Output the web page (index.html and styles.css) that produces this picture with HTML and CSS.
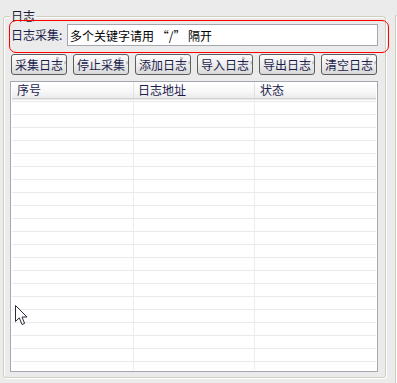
FILE: index.html
```html
<!DOCTYPE html>
<html>
   <head>
      <title>日志</title>
      <meta charset="utf-8">
      <link rel="stylesheet" href="styles.css">
   </head>
   <body>
      <div class="window">
         <div class="group">
            <div class="legend">日志</div>
            <div class="field-row">
               <label class="field-label">日志采集:</label>
               <input class="field-input" type="text" value="多个关键字请用 “/” 隔开">
            </div>
            <div class="btn-row">
               <button class="btn">采集日志</button>
               <button class="btn">停止采集</button>
               <button class="btn">添加日志</button>
               <button class="btn">导入日志</button>
               <button class="btn">导出日志</button>
               <button class="btn">清空日志</button>
            </div>
            <div class="list">
               <div class="list-head">
                  <div class="col col-id">序号</div>
                  <div class="col col-path">日志地址</div>
                  <div class="col col-state">状态</div>
               </div>
               <div class="list-body">
                  <div class="col col-id"></div>
                  <div class="col col-path"></div>
                  <div class="col col-state"></div>
               </div>
            </div>
         </div>
         <div class="side"></div>
      </div>

      <div class="mark"></div>

      <svg class="cursor" width="13" height="21" viewBox="0 0 13 21">
         <path d="M0.5 0.5 L0.5 16.5 L4.3 12.8 L7 19.5 L9.6 18.4 L7 12 L12 12 Z" fill="#fff" stroke="#2a2a3a" stroke-width="1" stroke-linejoin="round"/>
      </svg>
   </body>
</html>
```

FILE: styles.css
```css
body, html {
   margin: 0;
   width: 397px;
   height: 383px;
   overflow: hidden;
   background: #ebebeb;
   font-family: "Noto Sans CJK SC", sans-serif;
   font-size: 12px;
   position: relative;
}

.window {
   display: flex;
   height: 383px;
}

.group {
   box-sizing: border-box;
   width: 383px;
   height: 362px;
   margin: 16px 0 0 3px;
   padding: 0 7px 5px 6px;
   border: 1px solid #cfcfbe;
   border-radius: 3px;
   box-shadow: inset 1px 1px 0 #fff, 1px 1px 0 #fff;
   display: flex;
   flex-direction: column;
}

.legend {
   align-self: flex-start;
   height: 14px;
   line-height: 14px;
   margin: -8px 0 0 0;
   padding: 0 1px;
   background: #ebebeb;
   color: #1a1a34;
}

.field-row {
   display: flex;
   align-items: center;
   height: 22px;
   margin-top: 1px;
}

.field-label {
   flex: 1;
   padding-left: 1px;
   color: #1c1c4c;
   line-height: 14px;
}

.field-input {
   box-sizing: border-box;
   width: 311px;
   height: 22px;
   margin: 0;
   padding: 0 2px;
   border: 1px solid #a3a8b0;
   background: #fff;
   color: #000;
   font-family: "Noto Sans CJK SC", sans-serif;
   font-size: 12px;
   outline: none;
}

.btn-row {
   display: flex;
   justify-content: space-between;
   height: 21px;
   margin-top: 8px;
   padding: 0 1px;
}

.btn {
   position: relative;
   overflow: hidden;
   width: 56px;
   height: 21px;
   padding: 0;
   border: 1px solid #5e5e5e;
   border-radius: 3px;
   background: linear-gradient(#fdfdfd, #ececec 55%, #d8d8d8);
   color: #1c1c4c;
   font-family: "Noto Sans CJK SC", sans-serif;
   font-size: 12px;
   line-height: 18px;
}

.btn::after {
   content: "";
   position: absolute;
   top: -3px;
   right: -3px;
   width: 7px;
   height: 7px;
   border: 3px dotted rgba(150, 150, 150, 0.45);
   border-radius: 50%;
}

.list {
   box-sizing: border-box;
   height: 291px;
   margin-top: 6px;
   padding: 0 1px;
   border: 1px solid #a3a8b0;
   background: #fff;
   display: flex;
   flex-direction: column;
}

.list-head {
   display: flex;
   height: 16px;
   border-bottom: 1px solid #d2d2d2;
   box-shadow: 0 1px 0 #e6e6e6;
   background: linear-gradient(#ffffff, #f8f8f9 55%, #ececee);
   color: #1c1c4c;
   line-height: 16px;
}

.list-head .col {
   padding-left: 4px;
   border-right: 1px solid #e2e2e2;
}

.list-body {
   flex: 1;
   display: flex;
   margin-top: 1px;
   background: repeating-linear-gradient(to bottom,
      transparent 0, transparent 1px,
      #e9e9e9 1px, #e9e9e9 2px,
      transparent 2px, transparent 13px);
}

.list-body .col {
   border-right: 1px solid #ededed;
   margin-bottom: 1px;
}

.col {
   box-sizing: border-box;
}

.col-id {
   width: 122px;
}

.col-path {
   width: 121px;
}

.col-state {
   flex: 1;
   border-right: none !important;
}

.list-head .col-id {
   padding-left: 5px;
}

.list-head .col-state {
   padding-left: 5px;
}

.side {
   flex: 1;
   margin: 15px 0 0 9px;
   border-left: 1px solid #cfcfbe;
   border-top: 1px solid #cfcfbe;
   border-top-left-radius: 3px;
   box-shadow: inset 1px 1px 0 #fff;
}

.mark {
   position: absolute;
   left: 9px;
   top: 20px;
   width: 380px;
   height: 33px;
   box-sizing: border-box;
   border: 1px solid #ff0000;
   border-radius: 7px;
}

.cursor {
   position: absolute;
   left: 15px;
   top: 305px;
}
```
